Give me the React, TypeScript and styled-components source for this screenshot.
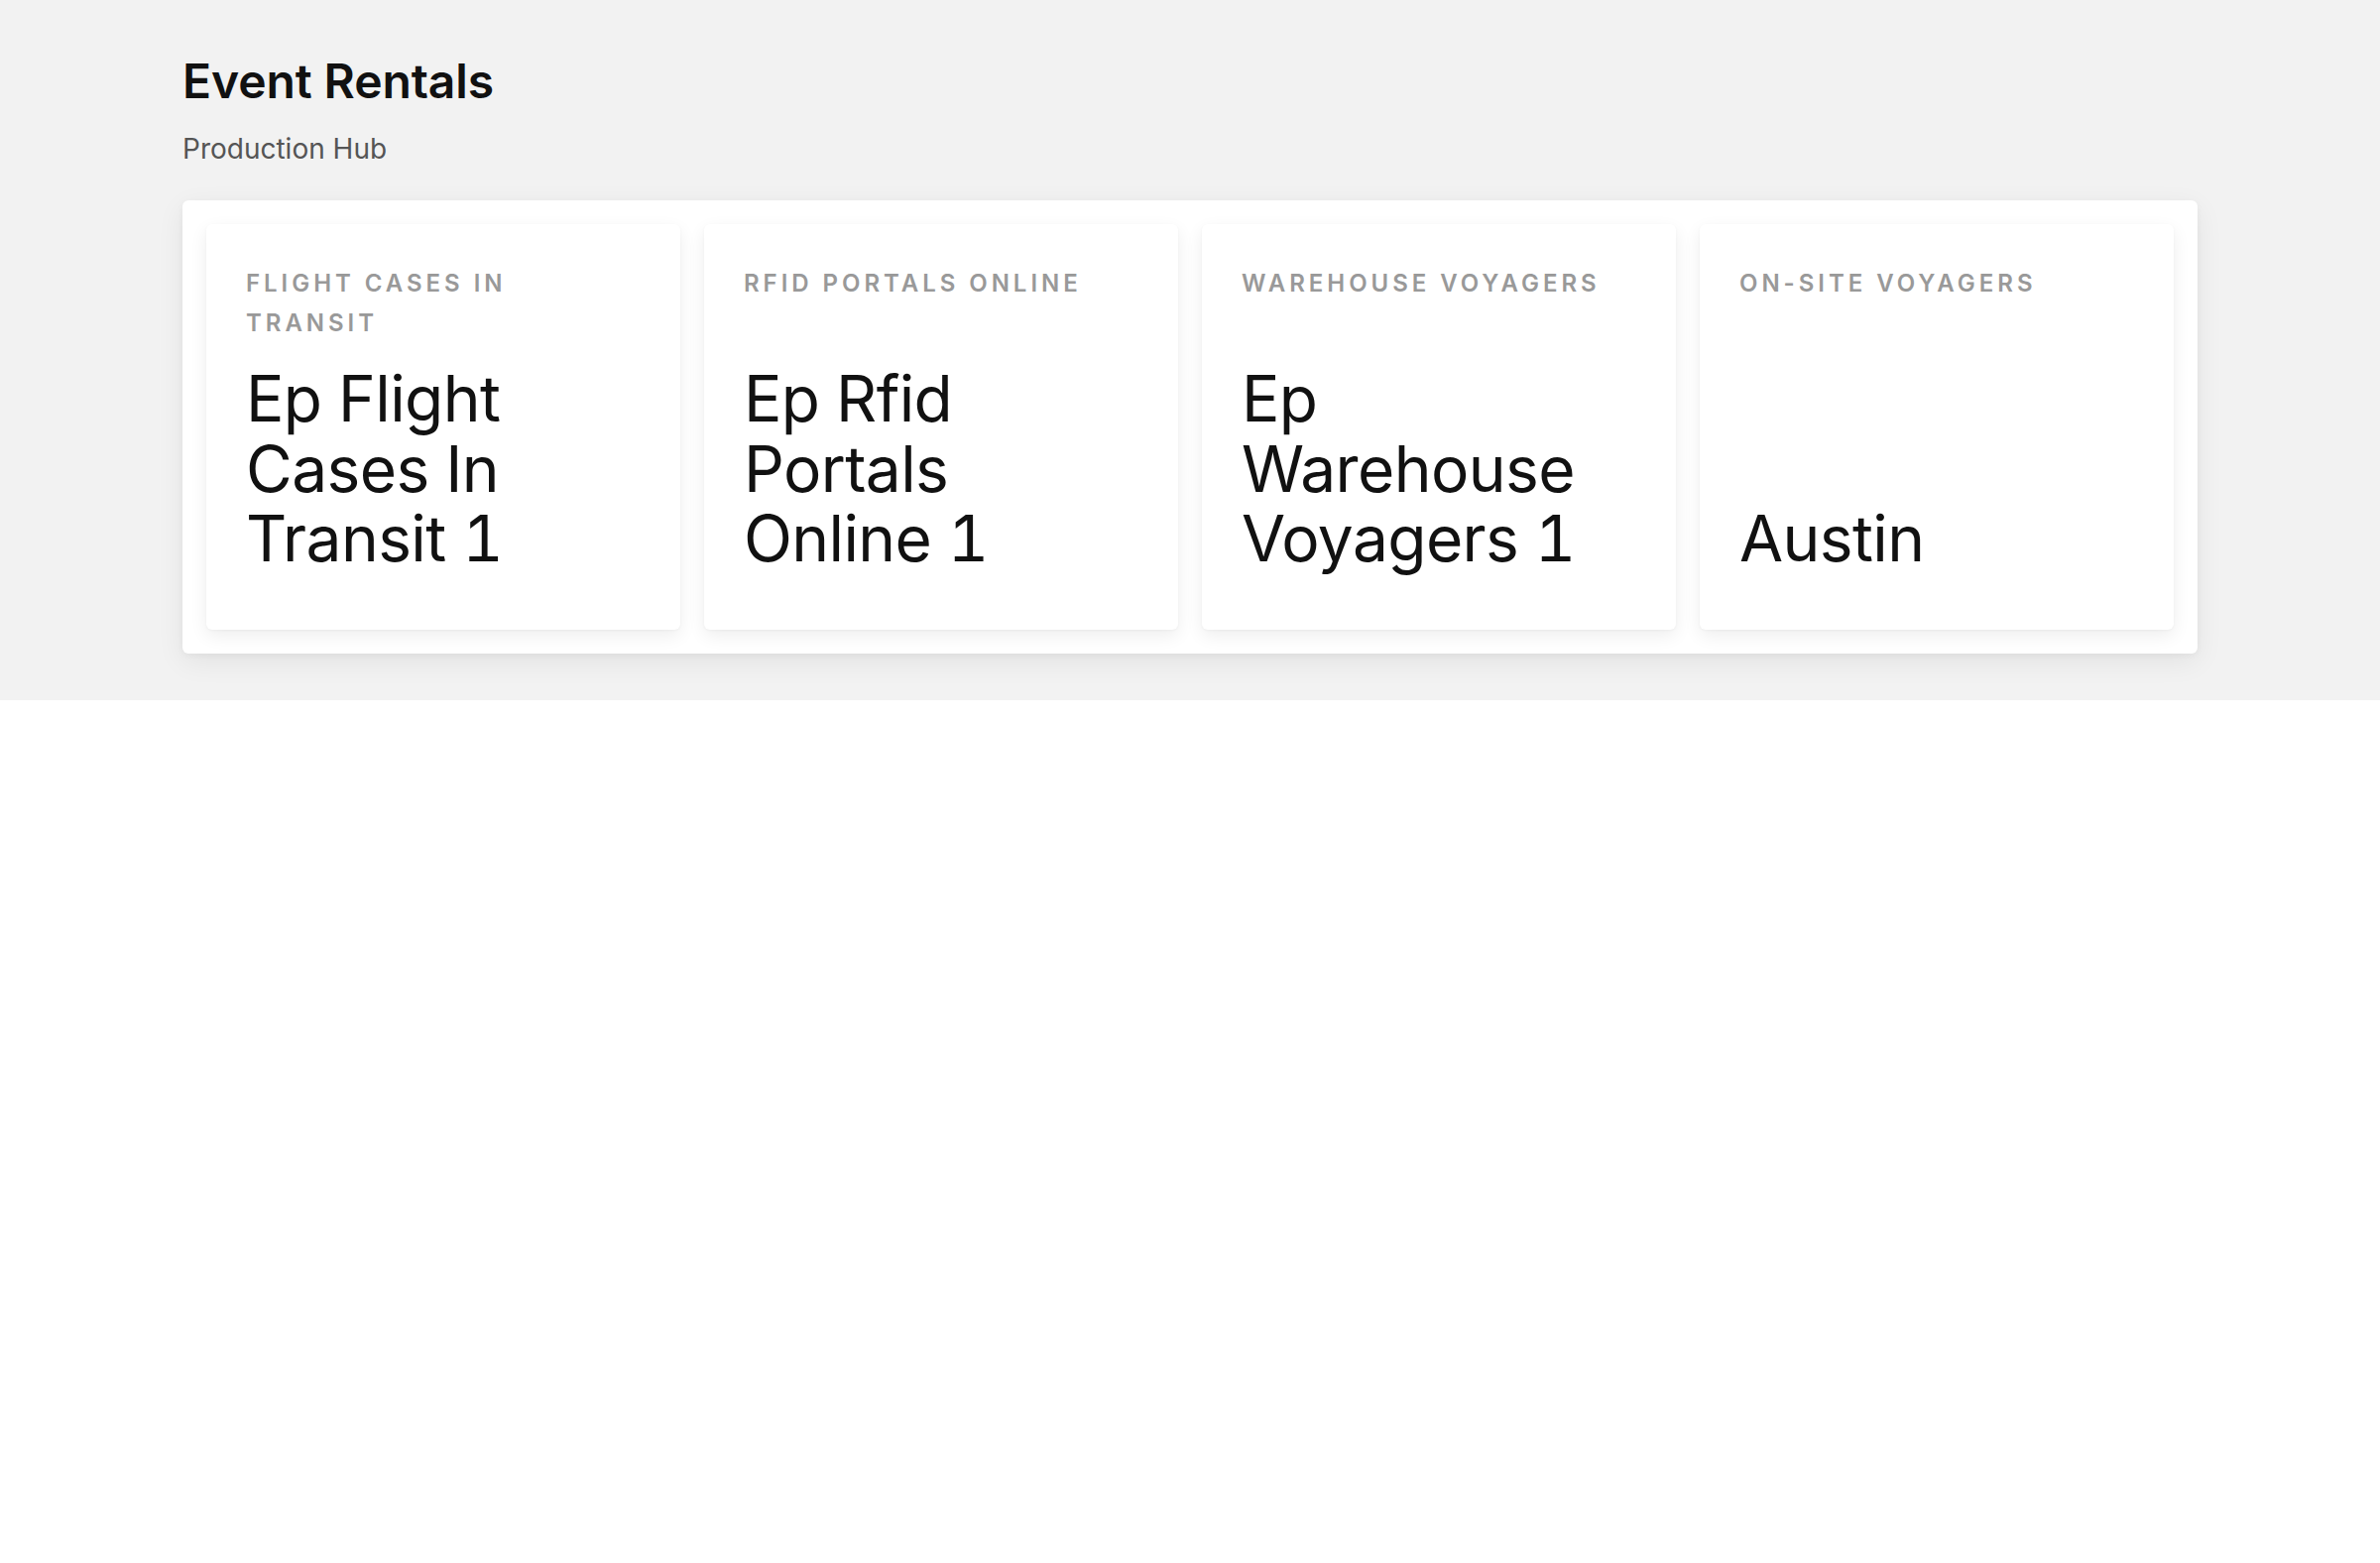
import React from "react";
import styled, { createGlobalStyle } from "styled-components";

const GlobalStyle = createGlobalStyle`
  html, body {
    margin: 0;
    padding: 0;
    background: #ffffff;
  }
  body {
    font-family: Inter, "Noto Sans", "Liberation Sans", sans-serif;
    color: #111111;
  }
  * { box-sizing: border-box; }
`;

const Header = styled.section`
  background: #f2f2f2;
  padding: 48px 184px 47px;
`;

const Title = styled.h1`
  margin: 0;
  font-size: 48px;
  line-height: 1.4;
  font-weight: 600;
  color: #111111;
  letter-spacing: -0.1px;
`;

const Subtitle = styled.p`
  margin: 14px 0 31px;
  font-size: 28px;
  line-height: 42px;
  font-weight: 400;
  color: #555555;
`;

const Panel = styled.div`
  background: #ffffff;
  border-radius: 6px;
  padding: 24px;
  display: grid;
  grid-template-columns: repeat(4, 1fr);
  gap: 24px;
  box-shadow: 0 8px 28px rgba(0, 0, 0, 0.07), 0 2px 6px rgba(0, 0, 0, 0.04);
`;

const Card = styled.div`
  background: #ffffff;
  border-radius: 6px;
  padding: 40px 40px 57px;
  display: flex;
  flex-direction: column;
  gap: 21px;
  min-height: 409px;
  box-shadow: 0 6px 18px rgba(0, 0, 0, 0.07), 0 1px 3px rgba(0, 0, 0, 0.04);
`;

const Label = styled.div`
  font-size: 24px;
  line-height: 40px;
  font-weight: 600;
  letter-spacing: 0.165em;
  text-transform: uppercase;
  color: #999999;
`;

const Value = styled.div`
  margin-top: auto;
  font-size: 64px;
  line-height: 1.1;
  font-weight: 400;
  color: #111111;
  letter-spacing: -0.6px;
  font-variant-numeric: tabular-nums;
`;

const stats = [
  { label: "Flight Cases In Transit", value: "Ep Flight Cases In Transit 1" },
  { label: "RFID Portals Online", value: "Ep Rfid Portals Online 1" },
  { label: "Warehouse Voyagers", value: "Ep Warehouse Voyagers 1" },
  { label: "On-Site Voyagers", value: "Austin" },
];

export default function App() {
  return (
    <>
      <GlobalStyle />
      <Header>
        <Title>Event Rentals</Title>
        <Subtitle>Production Hub</Subtitle>
        <Panel>
          {stats.map((s) => (
            <Card key={s.label}>
              <Label>{s.label}</Label>
              <Value>{s.value}</Value>
            </Card>
          ))}
        </Panel>
      </Header>
    </>
  );
}
